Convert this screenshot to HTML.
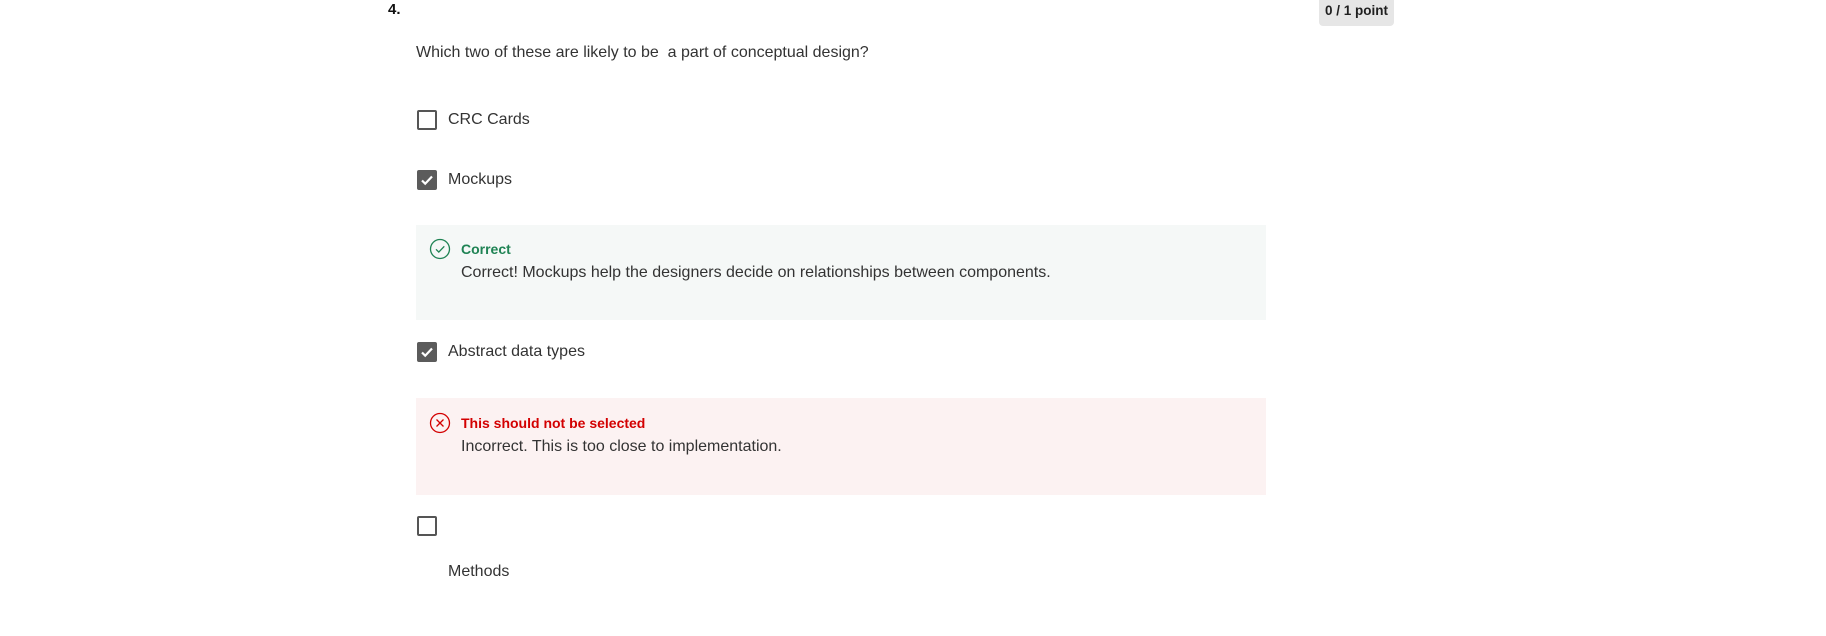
<!DOCTYPE html>
<html><head><style>
body{margin:0;width:1826px;height:636px;background:#fff;font-family:"Liberation Sans",sans-serif;color:#333;position:relative;overflow:hidden}
.a{position:absolute;white-space:nowrap}
.t{font-size:16px;line-height:20px}
.cb{position:absolute;left:417px;width:16px;height:16px;border:2px solid #555;border-radius:2px;box-sizing:content-box}
.cb.on{background:#5b5b5b;border-color:#5b5b5b}
.box{position:absolute;left:416px;width:850px}
</style></head><body>
<div class="a" style="left:388px;top:1px;font-weight:bold;font-size:15px;color:#111">4.</div>
<div class="a" style="left:1319px;top:0;width:75px;height:26px;background:#e6e6e6;border-radius:0 0 4px 4px;font-weight:bold;font-size:13.5px;line-height:22px;text-align:center;color:#1f1f1f">0 / 1 point</div>
<div class="a t" style="left:416px;top:43px">Which two of these are likely to be&nbsp; a part of conceptual design?</div>

<div class="cb" style="top:110px"></div>
<div class="a t" style="left:448px;top:110px">CRC Cards</div>

<div class="cb on" style="top:170px"><svg width="16" height="16" viewBox="0 0 16 16"><path d="M3 8.5l3.2 3.2L13 4.5" stroke="#fff" stroke-width="2.2" fill="none"/></svg></div>
<div class="a t" style="left:448px;top:170px">Mockups</div>

<div class="box" style="top:225px;height:95px;background:#f5f8f7"></div>
<svg class="a" style="left:429px;top:238px" width="22" height="22" viewBox="0 0 22 22"><circle cx="11" cy="11" r="9.5" stroke="#1f8354" stroke-width="1.3" fill="none"/><path d="M7 11.3l2.8 2.8L15.3 8.3" stroke="#1f8354" stroke-width="1.3" fill="none"/></svg>
<div class="a" style="left:461px;top:241px;font-weight:bold;font-size:14px;color:#1f8354">Correct</div>
<div class="a t" style="left:461px;top:263px">Correct! Mockups help the designers decide on relationships between components.</div>

<div class="cb on" style="top:342px"><svg width="16" height="16" viewBox="0 0 16 16"><path d="M3 8.5l3.2 3.2L13 4.5" stroke="#fff" stroke-width="2.2" fill="none"/></svg></div>
<div class="a t" style="left:448px;top:342px">Abstract data types</div>

<div class="box" style="top:398px;height:97px;background:#fcf2f2"></div>
<svg class="a" style="left:429px;top:412px" width="22" height="22" viewBox="0 0 22 22"><circle cx="11" cy="11" r="9.5" stroke="#d30001" stroke-width="1.3" fill="none"/><path d="M7.5 7.5l7 7M14.5 7.5l-7 7" stroke="#d30001" stroke-width="1.3"/></svg>
<div class="a" style="left:461px;top:415px;font-weight:bold;font-size:14px;color:#d30001">This should not be selected</div>
<div class="a t" style="left:461px;top:437px">Incorrect. This is too close to implementation.</div>

<div class="cb" style="top:516px"></div>
<div class="a t" style="left:448px;top:562px">Methods</div>
</body></html>
